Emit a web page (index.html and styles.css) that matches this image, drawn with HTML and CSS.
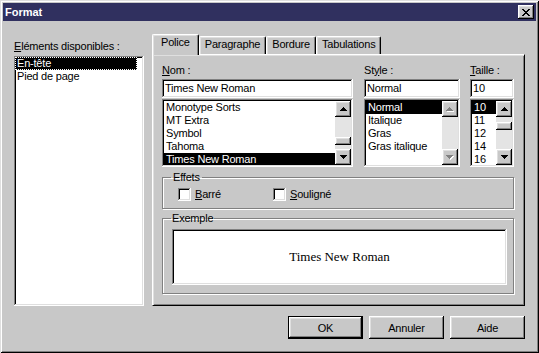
FILE: index.html
```html
<!DOCTYPE html>
<html>
<head>
    <title>Format</title>
    <link rel="stylesheet" href="styles.css">
</head>
<body>
    <div class="window">
        <div class="titlebar">
            <span class="title">Format</span>
            <button class="close-btn">
                <svg width="8" height="7" viewBox="0 0 8 7" shape-rendering="crispEdges">
                    <path fill="#000" d="M0 0h2v1H0zM6 0h2v1H6zM1 1h2v1H1zM5 1h2v1H5zM2 2h4v1H2zM3 3h2v1H3zM2 4h4v1H2zM1 5h2v1H1zM5 5h2v1H5zM0 6h2v1H0zM6 6h2v1H6z"/>
                </svg>
            </button>
        </div>

        <div class="content">
            <div class="left-col">
                <div class="label"><u>E</u>léments disponibles :</div>
                <div class="listbox elements-list">
                    <div class="item selected focused">En-tête</div>
                    <div class="item">Pied de page</div>
                </div>
            </div>

            <div class="right-col">
                <div class="tabs">
                    <div class="tab active">Police</div>
                    <div class="tab">Paragraphe</div>
                    <div class="tab">Bordure</div>
                    <div class="tab">Tabulations</div>
                </div>

                <div class="panel">
                    <div class="font-row">
                        <div class="field nom-field">
                            <div class="label"><u>N</u>om :</div>
                            <div class="textbox">Times New Roman</div>
                            <div class="listbox">
                                <div class="list-items">
                                    <div class="item">Monotype Sorts</div>
                                    <div class="item">MT Extra</div>
                                    <div class="item">Symbol</div>
                                    <div class="item">Tahoma</div>
                                    <div class="item selected">Times New Roman</div>
                                </div>
                                <div class="scrollbar">
                                    <div class="scroll-btn">
                                        <svg width="7" height="4" viewBox="0 0 7 4" shape-rendering="crispEdges"><path fill="#000" d="M3 0h1v1H3zM2 1h3v1H2zM1 2h5v1H1zM0 3h7v1H0z"/></svg>
                                    </div>
                                    <div class="scroll-track">
                                        <div class="scroll-thumb" style="margin-top: 20px"></div>
                                    </div>
                                    <div class="scroll-btn">
                                        <svg width="7" height="4" viewBox="0 0 7 4" shape-rendering="crispEdges"><path fill="#000" d="M0 0h7v1H0zM1 1h5v1H1zM2 2h3v1H2zM3 3h1v1H3z"/></svg>
                                    </div>
                                </div>
                            </div>
                        </div>

                        <div class="field style-field">
                            <div class="label">St<u>y</u>le :</div>
                            <div class="textbox">Normal</div>
                            <div class="listbox">
                                <div class="list-items">
                                    <div class="item selected">Normal</div>
                                    <div class="item">Italique</div>
                                    <div class="item">Gras</div>
                                    <div class="item">Gras italique</div>
                                </div>
                                <div class="scrollbar">
                                    <div class="scroll-btn">
                                        <svg width="8" height="5" viewBox="0 0 8 5" shape-rendering="crispEdges"><path fill="#fff" d="M4 1h1v1H4zM3 2h3v1H3zM2 3h5v1H2zM1 4h7v1H1z"/><path fill="#808080" d="M3 0h1v1H3zM2 1h3v1H2zM1 2h5v1H1zM0 3h7v1H0z"/></svg>
                                    </div>
                                    <div class="scroll-track"></div>
                                    <div class="scroll-btn">
                                        <svg width="8" height="5" viewBox="0 0 8 5" shape-rendering="crispEdges"><path fill="#fff" d="M1 1h7v1H1zM2 2h5v1H2zM3 3h3v1H3zM4 4h1v1H4z"/><path fill="#808080" d="M0 0h7v1H0zM1 1h5v1H1zM2 2h3v1H2zM3 3h1v1H3z"/></svg>
                                    </div>
                                </div>
                            </div>
                        </div>

                        <div class="field taille-field">
                            <div class="label"><u>T</u>aille :</div>
                            <div class="textbox">10</div>
                            <div class="listbox">
                                <div class="list-items">
                                    <div class="item selected">10</div>
                                    <div class="item">11</div>
                                    <div class="item">12</div>
                                    <div class="item">14</div>
                                    <div class="item">16</div>
                                </div>
                                <div class="scrollbar">
                                    <div class="scroll-btn">
                                        <svg width="7" height="4" viewBox="0 0 7 4" shape-rendering="crispEdges"><path fill="#000" d="M3 0h1v1H3zM2 1h3v1H2zM1 2h5v1H1zM0 3h7v1H0z"/></svg>
                                    </div>
                                    <div class="scroll-track">
                                        <div class="scroll-thumb" style="margin-top: 5px"></div>
                                    </div>
                                    <div class="scroll-btn">
                                        <svg width="7" height="4" viewBox="0 0 7 4" shape-rendering="crispEdges"><path fill="#000" d="M0 0h7v1H0zM1 1h5v1H1zM2 2h3v1H2zM3 3h1v1H3z"/></svg>
                                    </div>
                                </div>
                            </div>
                        </div>
                    </div>

                    <fieldset class="group effets">
                        <legend>Effets</legend>
                        <div class="check-row">
                            <label class="check"><span class="checkbox"></span><span><u>B</u>arré</span></label>
                            <label class="check"><span class="checkbox"></span><span><u>S</u>ouligné</span></label>
                        </div>
                    </fieldset>

                    <fieldset class="group exemple">
                        <legend>Exemple</legend>
                        <div class="preview">Times New Roman</div>
                    </fieldset>
                </div>

                <div class="buttons">
                    <button class="btn default">OK</button>
                    <button class="btn">Annuler</button>
                    <button class="btn">Aide</button>
                </div>
            </div>
        </div>
    </div>
</body>
</html>
```

FILE: styles.css
```css
* {
    margin: 0;
    padding: 0;
    box-sizing: border-box;
}

body {
    background-color: #c8c8c8;
    font-family: "Liberation Sans", Arial, sans-serif;
    font-size: 11px;
    letter-spacing: -0.2px;
    color: #000;
}

u {
    text-decoration: underline;
    text-underline-offset: 1px;
}

.window {
    width: 539px;
    height: 353px;
    padding: 3px;
    background-color: #c8c8c8;
    box-shadow: inset 1px 1px #dfdfdf, inset -1px -1px #000,
                inset 2px 2px #fff, inset -2px -2px #808080;
}

/* title bar */
.titlebar {
    height: 18px;
    background-color: #30305f;
    display: flex;
    align-items: center;
    justify-content: space-between;
    padding: 0 2px;
}

.title {
    color: #fff;
    font-weight: bold;
    font-size: 11px;
    letter-spacing: 0;
    line-height: 18px;
}

.close-btn,
.btn,
.scroll-btn,
.scroll-thumb {
    background-color: #c8c8c8;
    border: none;
    box-shadow: inset -1px -1px #000, inset 1px 1px #fff,
                inset -2px -2px #808080, inset 2px 2px #dfdfdf;
}

.close-btn {
    width: 16px;
    height: 14px;
    display: flex;
    align-items: center;
    justify-content: center;
    padding-right: 1px;
}

.close-btn svg {
    display: block;
}

/* main area */
.content {
    display: flex;
    gap: 8px;
    padding-left: 11px;
}

.left-col {
    width: 130px;
    padding-top: 19px;
}

.label {
    line-height: 13px;
    white-space: nowrap;
}

.listbox,
.textbox,
.preview,
.checkbox {
    background-color: #fff;
    box-shadow: inset -1px -1px #fff, inset 1px 1px #808080,
                inset -2px -2px #dfdfdf, inset 2px 2px #000;
}

.elements-list {
    height: 250px;
    margin-top: 3px;
    padding: 1px 7px 1px 1px;
}

.item {
    line-height: 13px;
    height: 13px;
    padding-left: 2px;
    white-space: nowrap;
    overflow: hidden;
}

.item.selected {
    background-color: #000;
    color: #fff;
}

.item.focused {
    outline: 1px dotted #fff;
    outline-offset: -1px;
}

/* tabs */
.right-col {
    width: 373px;
}

.tabs {
    display: flex;
    align-items: flex-end;
    height: 33px;
    padding-left: 2px;
}

.tab {
    height: 18px;
    padding: 1px 5px 0 5px;
    line-height: 13px;
    border: 1px solid;
    border-color: #fff #000 transparent #fff;
    border-bottom: none;
    border-radius: 2px 2px 0 0;
    box-shadow: inset -1px 0 #808080, inset 1px 1px #dfdfdf;
    background-color: #c8c8c8;
    white-space: nowrap;
}

.tab.active {
    position: relative;
    z-index: 1;
    height: 21px;
    margin: 0 -2px -1px -2px;
    padding: 1px 8px 0 8px;
}

.tab.active + .tab {
    margin-left: 2px;
}

.panel {
    height: 252px;
    border: 1px solid;
    border-color: #fff #000 #000 #fff;
    box-shadow: inset 1px 1px #dfdfdf, inset -1px -1px #808080;
    padding: 9px 10px 0 9px;
}

.font-row {
    display: flex;
}

.field {
    display: flex;
    flex-direction: column;
}

.nom-field {
    width: 191px;
    margin-right: 11px;
}

.style-field {
    width: 96px;
    margin-right: 10px;
}

.taille-field {
    width: 44px;
}

.textbox {
    height: 19px;
    margin-top: 2px;
    padding: 2px 3px;
    line-height: 15px;
    white-space: nowrap;
}

.field .listbox {
    height: 68px;
    margin-top: 1px;
    padding: 2px;
    display: flex;
}

.list-items {
    flex: 1;
    overflow: hidden;
}

.scrollbar {
    width: 16px;
    display: flex;
    flex-direction: column;
}

.scroll-btn {
    width: 16px;
    height: 16px;
    display: flex;
    align-items: center;
    justify-content: center;
}

.scroll-btn svg {
    display: block;
}

.scroll-track {
    flex: 1;
    background-color: #e4e4e4;
}

.scroll-thumb {
    height: 8px;
}

/* group boxes */
.group {
    width: 352px;
    border: 1px solid #808080;
    box-shadow: inset 1px 1px #fff, 1px 1px 0 #fff;
}

.group legend {
    line-height: 13px;
    padding: 0 2px;
}

.effets {
    height: 38px;
    margin-top: 4px;
    padding: 3px 8px 0 8px;
}

.check-row {
    display: flex;
    padding-left: 7px;
    line-height: 15px;
}

.check {
    display: flex;
    align-items: center;
    gap: 4px;
}

.check:first-child {
    width: 95px;
}

.checkbox {
    width: 13px;
    height: 13px;
}

.exemple {
    height: 82px;
    margin-top: 3px;
    padding: 4px 6px 0 8px;
}

.exemple legend {
    padding: 0 1px;
}

.preview {
    height: 56px;
    margin-left: 1px;
    display: flex;
    align-items: center;
    justify-content: center;
    font-family: "Liberation Serif", "Times New Roman", serif;
    font-size: 13px;
    letter-spacing: 0;
}

/* dialog buttons */
.buttons {
    display: flex;
    justify-content: flex-end;
    gap: 6px;
    margin-top: 10px;
}

.btn {
    width: 75px;
    height: 23px;
    font-family: "Liberation Sans", Arial, sans-serif;
    font-size: 11px;
    letter-spacing: -0.2px;
    color: #000;
}

.btn.default {
    border: 1px solid #000;
}
```
